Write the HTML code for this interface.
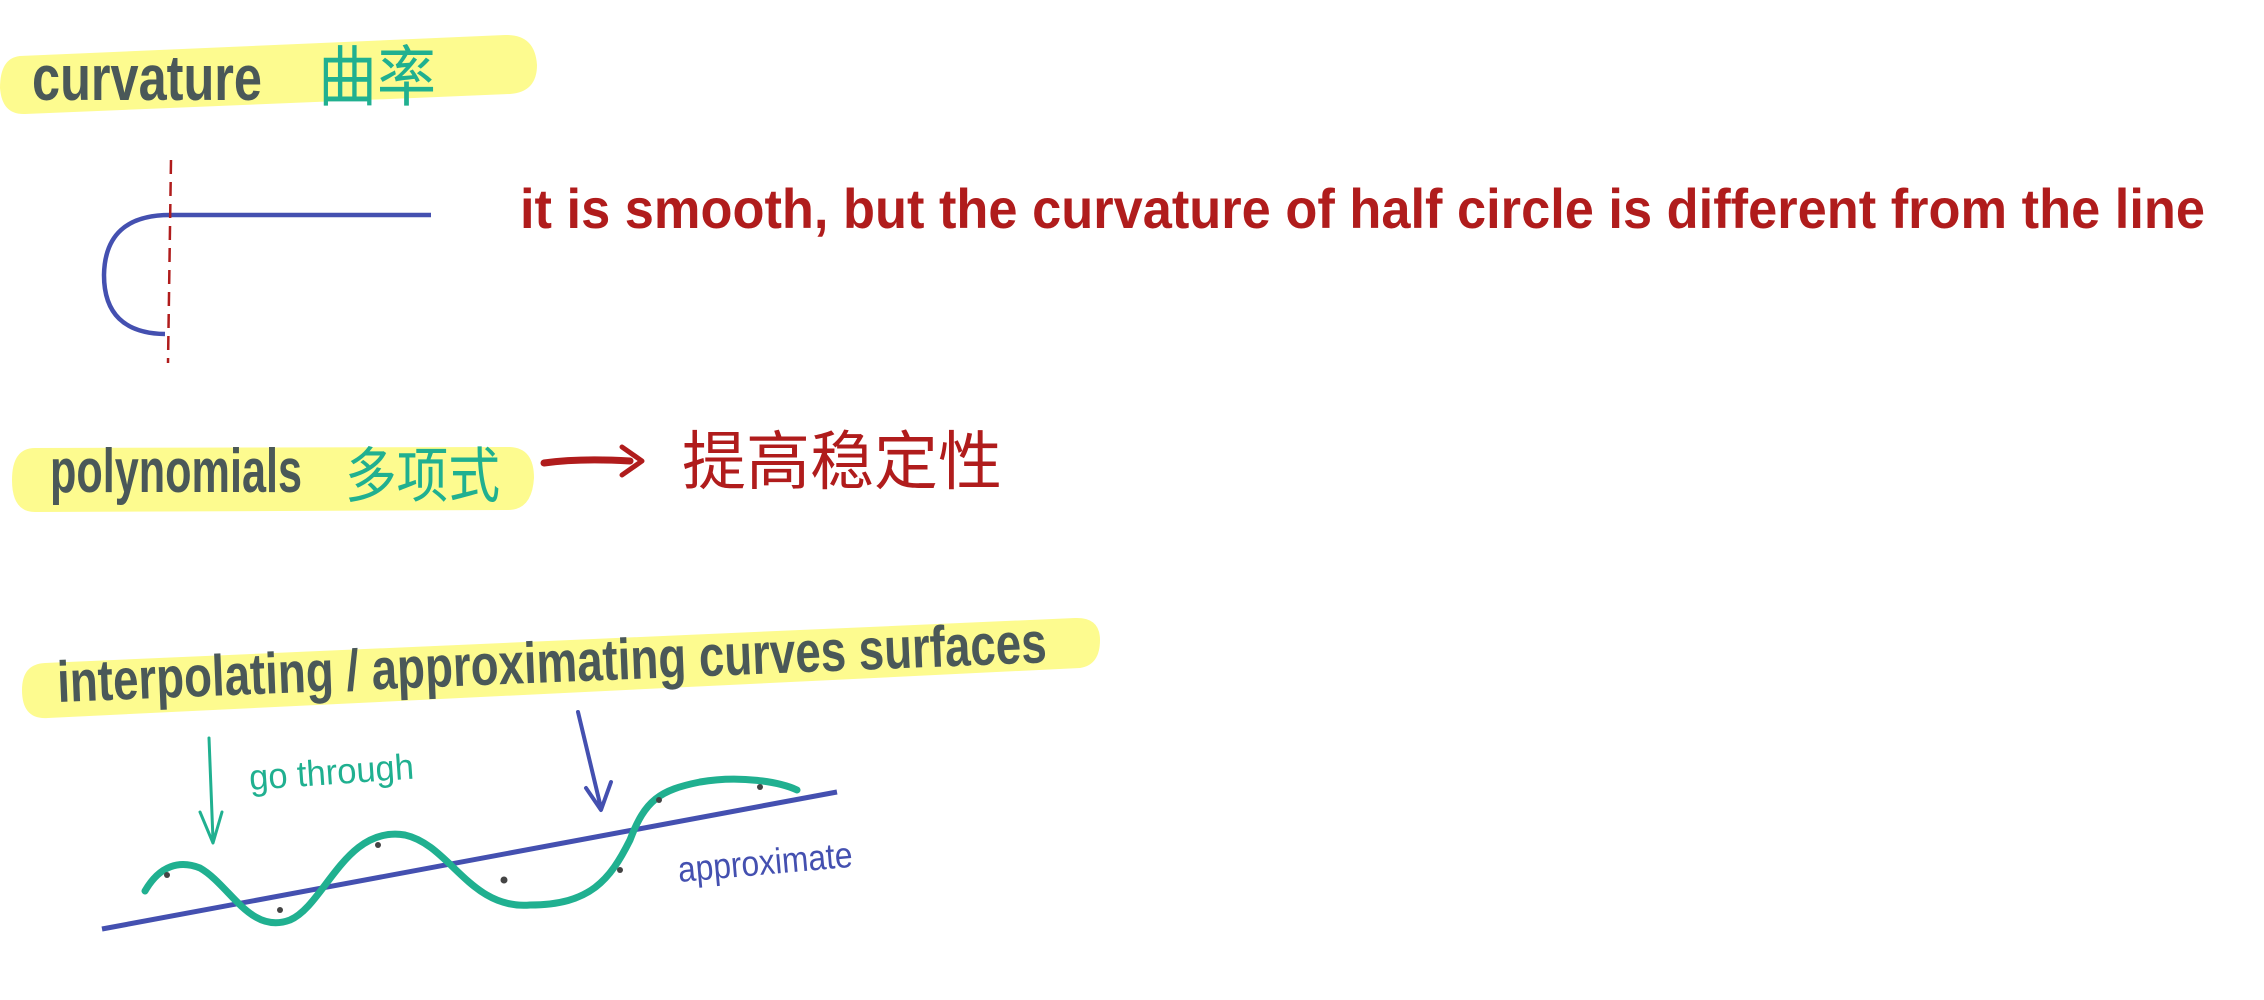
<!DOCTYPE html>
<html><head><meta charset="utf-8"><style>
html,body{margin:0;padding:0;background:#fff;width:2264px;height:1000px;overflow:hidden}
svg{display:block}
</style></head><body>
<svg width="2264" height="1000" viewBox="0 0 2264 1000" xmlns="http://www.w3.org/2000/svg">
<path d="M20,56 L505,35 Q535,34 537,65 Q537,92 510,94 L25,114 Q2,115 0,88 Q0,58 20,56 Z" fill="#fdfb8f"/>
<path d="M35,448 L510,447 Q534,448 534,478 Q532,510 508,510 L35,512 Q12,512 12,480 Q12,448 35,448 Z" fill="#fdfb8f"/>
<path d="M45,663 L1075,618 Q1100,617 1100,640 Q1100,665 1080,668 L48,718 Q22,720 22,690 Q22,664 45,663 Z" fill="#fdfb8f"/>

<g font-family="'Liberation Sans Narrow','Liberation Sans',sans-serif">
<text x="32" y="100" font-size="64" font-weight="bold" fill="#4a5858" textLength="230" lengthAdjust="spacingAndGlyphs">curvature</text>
<text x="318" y="100" font-size="66" fill="#20b090" font-family="'Liberation Sans','Noto Sans CJK SC',sans-serif" textLength="118" lengthAdjust="spacingAndGlyphs">曲率</text>

<text x="520" y="228" font-size="56" font-weight="bold" fill="#b01c1c" textLength="1685" lengthAdjust="spacingAndGlyphs">it is smooth, but the curvature of half circle is different from the line</text>

<text x="50" y="492" font-size="62" font-weight="bold" fill="#4a5858" textLength="252" lengthAdjust="spacingAndGlyphs">polynomials</text>
<text x="345" y="497" font-size="60" fill="#20b090" font-family="'Liberation Sans','Noto Sans CJK SC',sans-serif" textLength="155" lengthAdjust="spacingAndGlyphs">多项式</text>
<text x="682" y="484" font-size="64" fill="#b01c1c" font-family="'Liberation Sans','Noto Sans CJK SC',sans-serif" textLength="320" lengthAdjust="spacingAndGlyphs">提高稳定性</text>

<text x="58" y="702" font-size="58" font-weight="bold" fill="#4a5858" textLength="990" lengthAdjust="spacingAndGlyphs" transform="rotate(-2.3 58 702)">interpolating / approximating curves surfaces</text>

<text x="250" y="790" font-size="36" fill="#20b090" textLength="165" lengthAdjust="spacingAndGlyphs" transform="rotate(-4 250 790)">go through</text>
<text x="679" y="882" font-size="36" fill="#4450b0" textLength="175" lengthAdjust="spacingAndGlyphs" transform="rotate(-5 679 882)">approximate</text>
</g>

<path d="M431,215 L170,215 Q105,215 104,275 Q104,333 165,334" fill="none" stroke="#4450b0" stroke-width="4.5"/>
<line x1="171" y1="160" x2="168" y2="363" stroke="#b01c1c" stroke-width="2.5" stroke-dasharray="14,8"/>

<path d="M544,463 Q580,458 630,461" fill="none" stroke="#b01c1c" stroke-width="7" stroke-linecap="round"/>
<path d="M622,447 L642,461 L622,475" fill="none" stroke="#b01c1c" stroke-width="5" stroke-linecap="round" stroke-linejoin="round"/>

<path d="M209,738 L213,840 M200,812 L213,843 L222,812" fill="none" stroke="#20b090" stroke-width="3" stroke-linecap="round" stroke-linejoin="round"/>
<path d="M578,712 L601,808 M586,788 L601,810 L611,782" fill="none" stroke="#4450b0" stroke-width="4" stroke-linecap="round" stroke-linejoin="round"/>

<line x1="102" y1="929" x2="837" y2="792" stroke="#4450b0" stroke-width="5"/>
<path d="M145,891 C160,865 180,860 200,868 C230,885 250,935 290,920 C325,905 345,825 405,835 C450,845 470,910 530,905 C590,905 610,880 630,840 C645,800 660,790 700,782 C740,775 780,782 797,790" fill="none" stroke="#20b090" stroke-width="7" stroke-linecap="round"/>
<g fill="#444">
<circle cx="167" cy="875" r="3"/><circle cx="280" cy="910" r="3"/><circle cx="378" cy="845" r="3"/>
<circle cx="504" cy="880" r="3.5"/><circle cx="620" cy="870" r="3"/><circle cx="659" cy="800" r="3"/><circle cx="760" cy="787" r="3"/>
</g>
</svg>
</body></html>
